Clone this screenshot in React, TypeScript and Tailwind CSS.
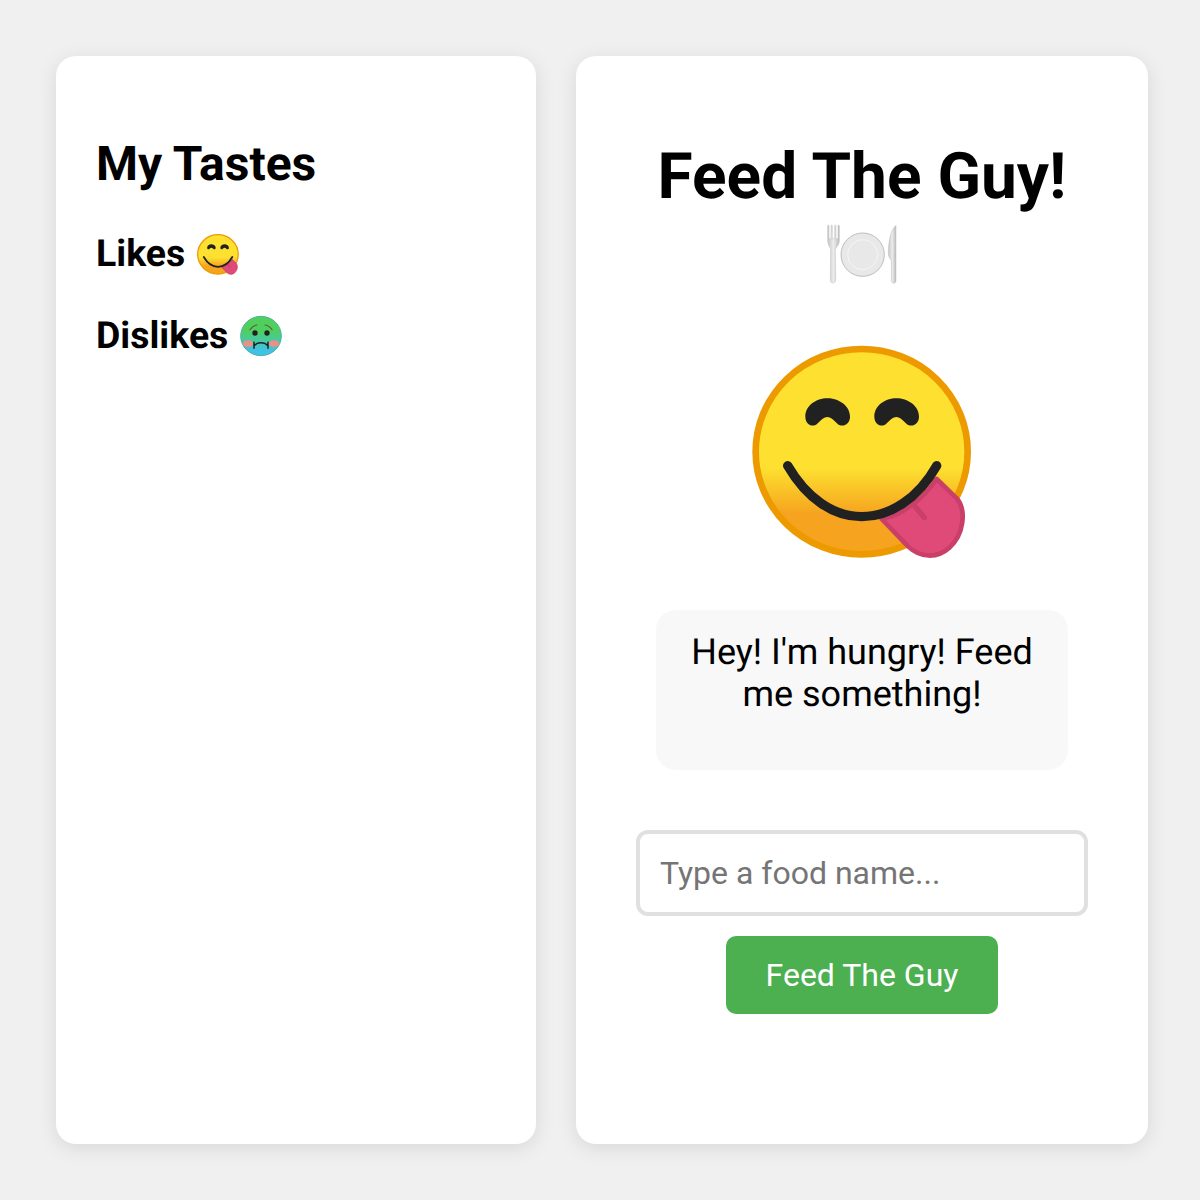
import React from "react";

// the emoji in the picture are an older Noto set than the installed font, so they are drawn
const SmileEmoji = ({ className, id }: { className: string; id: string }) => (
  <svg viewBox="6 0 720 705" className={className} role="img" aria-label="😋">
    <defs>
      <linearGradient id={id} x1="0" y1="0" x2="0" y2="1">
        <stop offset="0.58" stopColor="#fde030" />
        <stop offset="0.8" stopColor="#f6a41f" />
      </linearGradient>
    </defs>
    <ellipse cx="365" cy="350" rx="318" ry="308" fill={`url(#${id})`} stroke="#ed9a00" strokeWidth="20" />
    <path d="M196 245C196 212 228 190 262 190C296 190 330 212 330 245C330 270 304 280 290 264C280 254 272 246 262 246C252 246 244 254 234 264C220 280 196 270 196 245Z" fill="#212121" />
    <path d="M403 245C403 212 435 190 469 190C503 190 537 212 537 245C537 270 511 280 497 264C487 254 479 246 469 246C459 246 451 254 441 264C427 280 403 270 403 245Z" fill="#212121" />
    <path d="M590 432L650 490C680 525 672 598 628 638C590 672 540 668 505 635L425 552C490 540 550 490 590 432Z" fill="#e04a78" stroke="#c93f68" strokeWidth="14" strokeLinejoin="round" />
    <path d="M520 508L553 548" stroke="#c93f68" strokeWidth="16" strokeLinecap="round" />
    <path d="M143 392C200 490 280 545 365 545C450 545 535 490 590 392" fill="none" stroke="#212121" strokeWidth="28" strokeLinecap="round" />
  </svg>
);

const SickEmoji = () => (
  <svg viewBox="0 0 150 144" className="w-[50px] h-[48px] ml-[8px] shrink-0" role="img" aria-label="🤢">
    <defs>
      <linearGradient id="sick" x1="0" y1="0" x2="0" y2="1">
        <stop offset="0.35" stopColor="#4fd05c" />
        <stop offset="0.9" stopColor="#3fc1ea" />
      </linearGradient>
    </defs>
    <ellipse cx="75" cy="72" rx="61" ry="59" fill="url(#sick)" stroke="#54b0a0" strokeWidth="3" />
    <ellipse cx="36" cy="95" rx="15" ry="10" fill="#ee8f86" />
    <ellipse cx="114" cy="95" rx="15" ry="10" fill="#ee8f86" />
    <path d="M42 53Q50 41 63 39M108 53Q100 41 87 39" fill="none" stroke="#6b5b3a" strokeWidth="3.5" strokeLinecap="round" />
    <circle cx="57" cy="63" r="8" fill="#212121" />
    <circle cx="93" cy="63" r="8" fill="#212121" />
    <path d="M56 100Q62 92 75 92Q88 92 94 100M54 91V109M96 91V109" fill="none" stroke="#212121" strokeWidth="4.5" strokeLinecap="round" />
  </svg>
);

const PlateEmoji = () => (
  <svg viewBox="0 0 252 210" className="w-[84px] h-[70px]" role="img" aria-label="🍽️">
    <defs>
      <linearGradient id="steel" x1="0" y1="0" x2="1" y2="0">
        <stop offset="0" stopColor="#c4c4c4" />
        <stop offset="0.5" stopColor="#ececec" />
        <stop offset="1" stopColor="#bababa" />
      </linearGradient>
    </defs>
    <path d="M23 24V68C23 80 30 88 32 94L31 186C31 198 47 198 47 186L46 94C49 88 58 80 58 68V24C58 20 54 20 54 24V62H48V24C48 20 44 20 44 24V62H37V24C37 20 33 20 33 24V62H27V24C27 20 23 20 23 24Z" fill="url(#steel)" stroke="#c0c0c0" strokeWidth="1.5" />
    <circle cx="128" cy="110" r="65" fill="#e8e8e8" stroke="#bdbdbd" strokeWidth="3" />
    <circle cx="128" cy="110" r="45" fill="#e8e8e8" stroke="#f5f5f5" strokeWidth="3" />
    <path d="M226 24C212 36 205 70 205 106C205 118 212 124 214 128L214 188C214 198 228 198 228 188V28C228 22 229 21 226 24Z" fill="url(#steel)" stroke="#c0c0c0" strokeWidth="1.5" />
  </svg>
);

export default function App() {
  return (
    <div className="min-h-[1200px] bg-[#f0f0f0] flex gap-10 p-14 font-['Roboto',sans-serif] text-black [text-rendering:geometricPrecision]">
      <div className="w-[480px] h-[1088px] shrink-0 bg-white rounded-[20px] shadow-[0_4px_20px_rgba(0,0,0,0.1)] px-10 pt-10">
        <h2 className="text-[48px] font-bold leading-[56px] mt-[40px]">My Tastes</h2>
        <h3 className="flex items-center text-[37.44px] font-bold mt-10 h-[44px]">
          Likes
          <SmileEmoji id="smile-sm" className="w-[46px] h-[45px] ml-[10px] shrink-0" />
        </h3>
        <h3 className="flex items-center text-[37.44px] font-bold mt-[38px] h-[44px]">
          Dislikes
          <SickEmoji />
        </h3>
      </div>
      <div className="w-[572px] h-[1088px] shrink-0 bg-white rounded-[20px] shadow-[0_4px_20px_rgba(0,0,0,0.1)] flex flex-col items-center px-[60px] pt-[83px]">
        <h1 className="flex flex-col items-center text-[64px] font-bold leading-[76px]">
          Feed The Guy!
          <span className="h-[76px] flex items-center"><PlateEmoji /></span>
        </h1>
        <SmileEmoji id="smile-lg" className="w-[240px] h-[235px] mt-[44px] shrink-0" />
        <div className="w-[412px] h-[160px] mt-10 bg-[#f8f8f8] rounded-[20px] px-5 pt-[21px] text-center text-[36px] leading-[42px]">Hey! I'm hungry! Feed me something!</div>
        <input className="w-[452px] h-[86px] mt-[60px] border-4 border-[#e0e0e0] rounded-xl px-5 text-[32px] outline-none placeholder:text-[#757575]" placeholder="Type a food name..." />
        <button className="w-[272px] h-[78px] mt-5 bg-[#4caf50] rounded-[10px] text-white text-[32px]">Feed The Guy</button>
      </div>
    </div>
  );
}
